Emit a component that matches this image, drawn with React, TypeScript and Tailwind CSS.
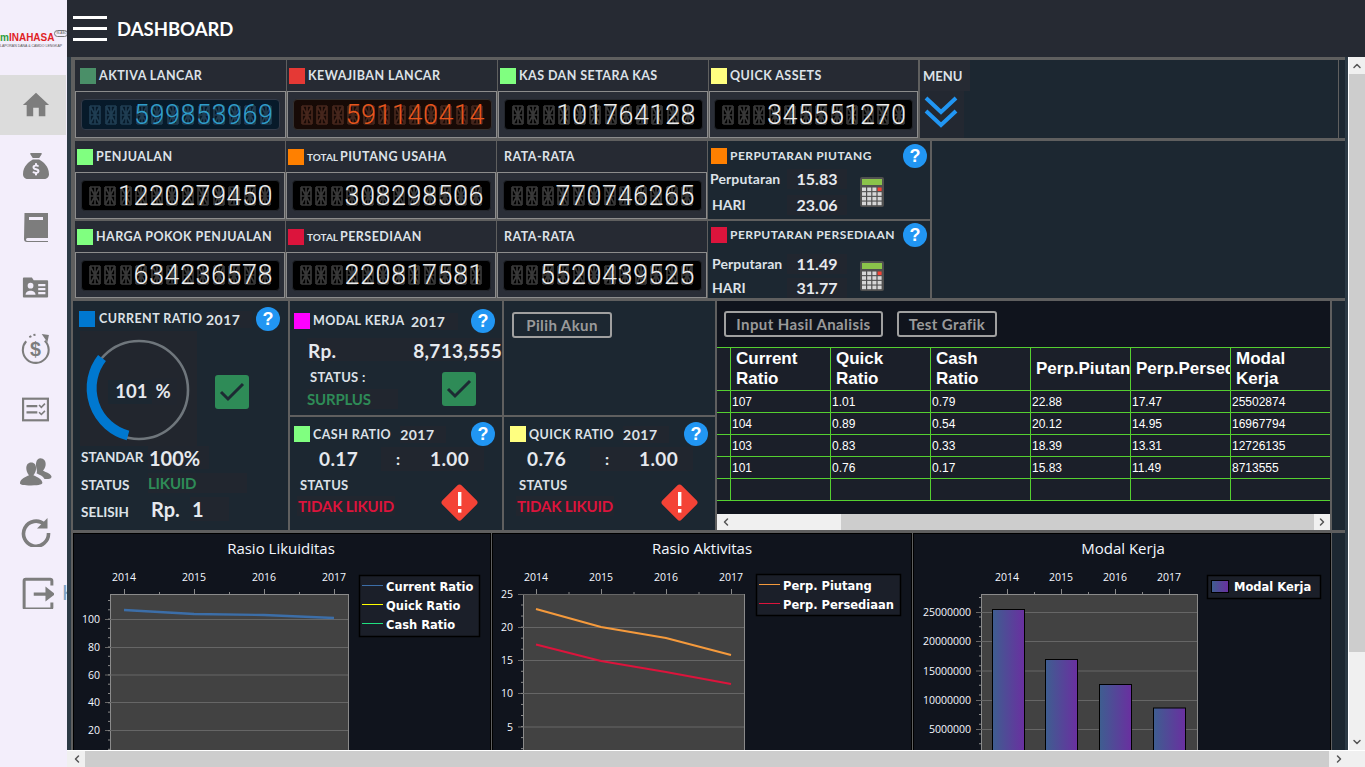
import React from 'react';
import { FaSackDollar } from 'react-icons/fa6';
import { ChevronLeft, ChevronRight, ChevronDown, ChevronUp } from 'lucide-react';

const ui = '[font-family:Lato,sans-serif]';

type LcdTheme = 'white' | 'blue' | 'orange';

const lcdThemes: Record<LcdTheme, { screen: string; lit: string; ghost: string; rim: string }> = {
  white: { screen: 'bg-black', lit: 'text-[#ececec]', ghost: 'text-[#383838]', rim: 'border-[#23262c]' },
  blue: { screen: 'bg-[#071a2a]', lit: 'text-[#2f9dca]', ghost: 'text-[#1f3d52]', rim: 'border-[#333a48]' },
  orange: { screen: 'bg-[#170a06]', lit: 'text-[#e8561c]', ghost: 'text-[#46261c]', rim: 'border-[#33302f]' },
};

const Ghost = () => (
  <svg viewBox="0 0 12 20" className="absolute left-0 top-0 h-[20px] w-[12px]" fill="none" stroke="currentColor" strokeWidth="1.7">
    <path d="M1 1h10M1 10h10M1 19h10M1 1v18M11 1v18M6 1v18M1 1l5 9 5-9M1 19l5-9 5 9" />
  </svg>
);

const Lcd = ({ value, theme = 'white' }: { value: string; theme?: LcdTheme }) => {
  const t = lcdThemes[theme];
  const cells = value.padStart(12, ' ').split('');
  return (
    <div className={`flex h-[31px] w-[199px] items-center justify-center rounded-[4px] border pl-[3px] ${t.rim} ${t.screen}`}>
      <div className="flex">
        {cells.map((c, i) => (
          <span key={i} className={`relative h-[20px] w-[15.5px] ${t.ghost}`}>
            <Ghost />
            <span className={`absolute left-[-2px] top-0 w-[16px] text-center text-[27px] font-light leading-[20px] [font-family:Roboto,sans-serif] ${t.lit}`}>
              {c.trim()}
            </span>
          </span>
        ))}
      </div>
    </div>
  );
};

const Title = ({ children, className = '' }: { children: React.ReactNode; className?: string }) => (
  <span className={`whitespace-nowrap text-[12.5px] font-bold tracking-[0.45px] text-[#dde2e8] ${className}`}>{children}</span>
);

const Swatch = ({ color }: { color: string }) => <span className={`h-[16px] w-[16px] shrink-0 ${color}`} />;

const Help = () => (
  <span className="flex h-[24px] w-[24px] shrink-0 items-center justify-center rounded-full bg-[#2196f3] text-[18px] font-bold leading-none text-white [font-family:'Liberation_Sans',sans-serif]">
    ?
  </span>
);

const StatCard = ({
  title,
  prefix,
  value,
  swatch,
  theme,
  width,
  small = false,
}: {
  title: string;
  prefix?: string;
  value: string;
  swatch?: string;
  theme?: LcdTheme;
  width: string;
  small?: boolean;
}) => (
  <div className={`flex flex-col ${width}`}>
    <div className={`flex h-[31px] items-center gap-[3px] bg-[#262a33] ${small ? 'pl-[2px]' : 'pl-[5px]'}`}>
      {swatch && <Swatch color={swatch} />}
      {prefix && <span className="mt-[2px] text-[10px] font-bold text-[#dde2e8]">{prefix}</span>}
      <Title className={`mt-[2px] ${swatch ? (prefix ? '-ml-px' : '') : 'ml-[2px]'}`}>{title}</Title>
    </div>
    <div className="flex flex-1 items-center justify-center border border-[#8c8c8c] bg-[#2a2e37]">
      <Lcd value={value} theme={theme} />
    </div>
  </div>
);

const Calculator = () => (
  <svg viewBox="0 0 24 30" className="h-[30px] w-[24px]">
    <rect width="24" height="30" rx="2" fill="#505050" />
    <rect x="2" y="2" width="20" height="6" fill="#8bc34a" />
    {[0, 1, 2, 3].map((r) =>
      [0, 1, 2, 3].map((c) => (
        <rect key={`${r}-${c}`} x={2 + c * 5.2} y={10.5 + r * 4.7} width="4" height="3.6" fill={r === 0 && c === 3 ? '#f44336' : '#d6d6d6'} />
      )),
    )}
  </svg>
);

const Turnover = ({
  title,
  swatch,
  a,
  b,
  className,
  rowGap,
  labelPad,
}: {
  title: string;
  swatch: string;
  a: string;
  b: string;
  className: string;
  rowGap: string;
  labelPad: string;
}) => (
  <div className={`flex flex-col bg-[#1c2731] ${className}`}>
    <div className="flex items-center pl-[3px] pr-[3px]">
      <Swatch color={swatch} />
      <Title className="ml-[3px] text-[12px] tracking-[0.3px]">{title}</Title>
      <span className="flex-1" />
      <Help />
    </div>
    <div className="flex items-center pl-[2px]">
      <div className={`flex w-[137px] flex-col ${rowGap}`}>
        <div className="flex items-center justify-between">
          <span className={`text-[14px] font-bold tracking-[0.1px] text-[#dde2e8] ${labelPad}`}>Perputaran</span>
          <span className="flex h-[20px] w-[60px] items-center justify-center bg-[#21262f] text-[16px] font-bold text-[#e6e9ee]">{a}</span>
        </div>
        <div className="flex items-center justify-between">
          <span className="pl-[2px] text-[14px] font-bold text-[#dde2e8]">HARI</span>
          <span className="flex h-[20px] w-[60px] items-center justify-center bg-[#21262f] text-[16px] font-bold text-[#e6e9ee]">{b}</span>
        </div>
      </div>
      <span className="ml-[13px]">
        <Calculator />
      </span>
    </div>
  </div>
);

const CheckBadge = () => (
  <svg viewBox="0 0 34 34" className="h-[34px] w-[34px] shrink-0">
    <rect width="34" height="34" rx="3" fill="#2e8b57" />
    <path d="M6 17l7 7L28 9" fill="none" stroke="#1d2a33" strokeWidth="3" />
  </svg>
);

const Warn = () => (
  <svg viewBox="0 0 37 37" className="h-[37px] w-[37px] shrink-0">
    <path d="M18.5 0.5a3 3 0 0 1 2.2 1l15 15a3 3 0 0 1 0 4l-15 15a3 3 0 0 1-4.4 0l-15-15a3 3 0 0 1 0-4l15-15a3 3 0 0 1 2.2-1z" fill="#f44336" />
    <rect x="17" y="8" width="3.4" height="14" fill="#fff" />
    <rect x="17" y="25" width="3.4" height="3.6" fill="#fff" />
  </svg>
);

const Year = ({ className = '' }: { className?: string }) => (
  <span className={`flex h-[17px] w-[46px] items-center bg-[#21262f] text-[14px] font-bold tracking-[0.5px] text-[#dde2e8] ${className}`}>2017</span>
);

const RatioCard = ({
  title,
  swatch,
  left,
  className,
  valueGap,
  leftPad,
  statusPad,
  warnPad,
}: {
  title: string;
  swatch: string;
  left: string;
  className: string;
  valueGap: string;
  leftPad: string;
  statusPad: string;
  warnPad: string;
}) => (
  <div className={`flex h-[113px] flex-col bg-[#1c2731] ${className}`}>
    <div className="flex h-[30px] items-center pt-[4px]">
      <Swatch color={swatch} />
      <Title className="ml-[3px] mt-[2px]">{title}</Title>
      <Year className="ml-[9px]" />
      <span className="flex-1" />
      <span className="mr-[7px]">
        <Help />
      </span>
    </div>
    <div className="flex h-[24px] items-center text-[19px] font-bold tracking-[0.4px] text-[#e6e9ee]">
      <span className={`w-[38px] ${leftPad}`}>{left}</span>
      <span className={`flex h-[24px] w-[103px] items-center bg-[#21262f] text-[16px] ${valueGap}`}>
        <span className="w-[49px] pl-[15px]">:</span>
        <span className="text-[19px]">1.00</span>
      </span>
    </div>
    <div className={`flex flex-1 items-start pt-[6px] ${statusPad}`}>
      <div className="flex flex-col gap-[3px]">
        <span className="pl-[3px] text-[13px] font-bold leading-[16px] tracking-[0.3px] text-[#dde2e8]">STATUS</span>
        <span className="bg-[#21262f] px-[1px] text-[15px] font-bold leading-[20px] tracking-[-0.2px] text-[#dc143c]">TIDAK LIKUID</span>
      </div>
      <span className="flex-1" />
      <span className={`mt-[7px] ${warnPad}`}>
        <Warn />
      </span>
    </div>
  </div>
);

const Gauge = () => (
  <div className="relative flex h-[115px] w-[117px] items-center justify-center bg-[#22262e]">
    <svg viewBox="0 0 117 115" className="absolute inset-0 h-[115px] w-[117px]">
      <circle cx="59" cy="59" r="49" fill="none" stroke="#6f767c" strokeWidth="2.6" />
      <path d="M22 27A49 49 0 0 0 48 104.5" fill="none" stroke="#0078d0" strokeWidth="10" />
    </svg>
    <span className="relative ml-[8px] mt-[6px] flex h-[24px] items-center gap-[4px] bg-[#1c2731] pl-[7px] text-[18.5px] font-bold text-[#e6e9ee]">
      101<span className="bg-[#21262f] pr-[6px] pl-[4px]">%</span>
    </span>
  </div>
);

const CurrentCard = () => (
  <div className="flex h-[229px] w-[215px] flex-col bg-[#1c2731]">
    <div className="flex h-[30px] items-center pl-[6px] pt-[6px]">
      <Swatch color="bg-[#0078d0]" />
      <Title className="ml-[4px] w-[102px]">CURRENT RATIO</Title>
      <Year className="ml-[5px]" />
      <span className="ml-[4px]">
        <Help />
      </span>
    </div>
    <div className="flex items-center pl-[7px]">
      <Gauge />
      <span className="ml-[18px] mt-[6px]">
        <CheckBadge />
      </span>
    </div>
    <div className="flex flex-col pl-[8px]">
      <div className="flex h-[23px] items-center">
        <span className="w-[67px] text-[13.5px] font-bold text-[#dde2e8]">STANDAR</span>
        <span className="flex h-[23px] w-[61px] items-center bg-[#21262f] pl-[1px] text-[20px] font-bold text-[#e6e9ee]">100%</span>
      </div>
      <div className="mt-[4px] flex h-[20px] items-center">
        <span className="w-[67px] pt-[4px] text-[13.5px] font-bold text-[#dde2e8]">STATUS</span>
        <span className="flex h-[20px] w-[99px] items-center bg-[#21262f] text-[15px] font-bold tracking-[-0.2px] text-[#2e8b57]">LIKUID</span>
      </div>
      <div className="mt-[4px] flex h-[24px] items-center">
        <span className="w-[70px] pt-[6px] text-[13.5px] font-bold text-[#dde2e8]">SELISIH</span>
        <span className="w-[39px] text-[20px] font-bold text-[#e6e9ee]">Rp.</span>
        <span className="flex h-[24px] w-[39px] items-center bg-[#21262f] pl-[2px] text-[20px] font-bold text-[#e6e9ee]">1</span>
      </div>
    </div>
  </div>
);

const ModalCard = () => (
  <div className="flex h-[114px] flex-col bg-[#1c2731] pl-[4px]">
    <div className="flex h-[36px] items-center pt-[4px]">
      <Swatch color="bg-[#ff00ff]" />
      <Title className="ml-[3px] w-[98px]">MODAL KERJA</Title>
      <Year className="w-[47px]" />
      <span className="ml-[13px]">
        <Help />
      </span>
    </div>
    <div className="ml-[13px] mt-[1px] flex h-[23px] items-center justify-between bg-[#21262f] pl-[1px] pt-[3px] text-[19px] font-bold tracking-[0.3px] text-[#e6e9ee]">
      <span>Rp.</span>
      <span>8,713,555</span>
    </div>
    <div className="flex flex-1 items-center pl-[13px] pt-[1px]">
      <div className="flex flex-col gap-[1px]">
        <span className="pl-[3px] text-[13px] font-bold tracking-[0.3px] text-[#dde2e8]">STATUS :</span>
        <span className="flex h-[20px] w-[91px] items-center bg-[#21262f] text-[15px] font-bold tracking-[-0.2px] text-[#2e8b57]">SURPLUS</span>
      </div>
      <span className="ml-[44px]">
        <CheckBadge />
      </span>
    </div>
  </div>
);

const Outlined = ({ children, className }: { children: React.ReactNode; className: string }) => (
  <button className={`flex h-[26px] items-center justify-center rounded-[3px] border-[2.5px] border-[#a0a0a0] text-[15px] font-bold tracking-[0.4px] text-[#9a9a9a] ${ui} ${className}`}>
    {children}
  </button>
);

const columns = [
  { key: 'Current Ratio', lines: ['Current', 'Ratio'] },
  { key: 'Quick Ratio', lines: ['Quick', 'Ratio'] },
  { key: 'Cash Ratio', lines: ['Cash', 'Ratio'] },
  { key: 'Perp.Piutang', lines: ['Perp.Piutang'] },
  { key: 'Perp.Persediaan', lines: ['Perp.Persediaan'] },
  { key: 'Modal Kerja', lines: ['Modal', 'Kerja'] },
];

const tableRows = [
  ['107', '1.01', '0.79', '22.88', '17.47', '25502874'],
  ['104', '0.89', '0.54', '20.12', '14.95', '16967794'],
  ['103', '0.83', '0.33', '18.39', '13.31', '12726135'],
  ['101', '0.76', '0.17', '15.83', '11.49', '8713555'],
  ['', '', '', '', '', ''],
];

const DataTable = () => (
  <div className="flex h-[229px] w-[613px] flex-col bg-[#10141d] [font-family:'Liberation_Sans',sans-serif]">
    <div className="flex h-[46px] items-center gap-[14px] pl-[7px]">
      <Outlined className="w-[159px]">Input Hasil Analisis</Outlined>
      <Outlined className="w-[100px]">Test Grafik</Outlined>
    </div>
    <div className="border-t border-t-[#55d030] bg-[#1b1f29]">
      <div className="flex h-[43px] border-b border-b-[#55d030]">
        <span className="w-[13px] shrink-0" />
        {columns.map((c) => (
          <div key={c.key} className="flex w-[100px] shrink-0 flex-col justify-center overflow-hidden border-l border-l-[#55d030] pl-[5px] text-[17px] font-bold leading-[20px] text-white">
            {c.lines.map((l) => (
              <span key={l} className="whitespace-nowrap">
                {l}
              </span>
            ))}
          </div>
        ))}
      </div>
      {tableRows.map((row, i) => (
        <div key={i} className="flex h-[22px] border-b border-b-[#55d030]">
          <span className="w-[13px] shrink-0" />
          {row.map((v, j) => (
            <div key={j} className="flex w-[100px] shrink-0 items-center border-l border-l-[#55d030] pl-[1px] text-[12px] text-white">
              {v}
            </div>
          ))}
        </div>
      ))}
    </div>
    <div className="flex-1" />
    <div className="flex h-[16px] items-center bg-[#f0f0f0]">
      <span className="flex w-[17px] justify-center">
        <ChevronLeft size={12} strokeWidth={3} color="#555" />
      </span>
      <span className="ml-[107px] h-full w-[473px] bg-[#cdcdcd]" />
      <span className="flex flex-1 justify-center">
        <ChevronRight size={12} strokeWidth={3} color="#555" />
      </span>
    </div>
  </div>
);

const tickMarks = (xs: number[], top: number) =>
  xs.map((x, i) => <line key={x} x1={x + 0.5} x2={x + 0.5} y1={i % 2 === 0 ? top - 5 : top - 2} y2={top} stroke="#8a8a8a" />);

const chartFont = "'Open Sans',sans-serif";
const legendFont = "'DejaVu Sans',sans-serif";

const Chart = ({
  box,
  title,
  titleX,
  plot,
  years,
  yLabels,
  minor,
  legend,
  children,
}: {
  box: [number, number];
  title: string;
  titleX: number;
  plot: [number, number];
  years: number[];
  yLabels: [string, number][];
  minor: number[];
  legend: { x: number; y: number; w: number; h: number; items: { label: string; color: string; y: number }[]; swatch?: boolean };
  children: React.ReactNode;
}) => {
  const [x0, x1] = plot;
  const step = years[1] - years[0];
  const topTicks = years.flatMap((x, i) => (i < years.length - 1 ? [x, x + step / 2] : [x]));
  return (
    <div className="h-[240px] shrink-0 border border-black bg-[#10141d]" style={{ width: box[1] }}>
      <svg viewBox={`${box[0] + 1} 534 ${box[1] - 2} 238`} width={box[1] - 2} height={238} className="block">
        <defs>
          <linearGradient id="bar" x1="0" x2="1" y1="0" y2="0">
            <stop offset="0" stopColor="#3e5e90" />
            <stop offset="1" stopColor="#6a2fa0" />
          </linearGradient>
        </defs>
        <text x={titleX} y={554} textAnchor="middle" fontSize="15" fill="#f4f8ff" fontFamily={chartFont}>
          {title}
        </text>
        {years.map((x, i) => (
          <text key={x} x={x} y={581} textAnchor="middle" fontSize="10.5" fill="#f4f8ff" fontFamily={chartFont}>
            {2014 + i}
          </text>
        ))}
        {tickMarks(topTicks, 594)}
        <rect x={x0 + 0.5} y={594.5} width={x1 - x0} height={200} fill="#424242" stroke="#8a8a8a" />
        {yLabels.map(([l, y]) => (
          <g key={l}>
            <line x1={x0 - 5} x2={x1} y1={y + 0.5} y2={y + 0.5} stroke="#666" />
            <text x={x0 - 10} y={y + 4} textAnchor="end" fontSize="10.5" fill="#f4f8ff" fontFamily={chartFont}>
              {l}
            </text>
          </g>
        ))}
        {minor.map((y) => (
          <line key={y} x1={x0 - 2} x2={x0} y1={y} y2={y} stroke="#8a8a8a" />
        ))}
        {children}
        <rect x={legend.x + 0.5} y={legend.y + 0.5} width={legend.w} height={legend.h} fill="#1b1f29" stroke="#000" strokeWidth="1.5" />
        {legend.items.map((it) => (
          <g key={it.label}>
            {legend.swatch ? (
              <rect x={legend.x + 4.5} y={it.y - 5.5} width={17} height={12} fill="url(#bar)" stroke="#000" />
            ) : (
              <line x1={legend.x + 3} x2={legend.x + 24} y1={it.y - 0.5} y2={it.y - 0.5} stroke={it.color} />
            )}
            <text x={legend.x + 27} y={it.y + 4.5} fontSize="11.5" fontWeight="700" fill="#fff" fontFamily={legendFont}>
              {it.label}
            </text>
          </g>
        ))}
      </svg>
    </div>
  );
};

const every = (start: number, gap: number, count: number) => Array.from({ length: count }, (_, i) => start + i * gap);

const Charts = () => (
  <div className="flex gap-px">
    <Chart
      box={[73, 418]}
      title="Rasio Likuiditas"
      titleX={281}
      plot={[110, 348]}
      years={[124, 194, 264, 334]}
      yLabels={[
        ['100', 619],
        ['80', 647],
        ['60', 674.5],
        ['40', 702],
        ['20', 730],
      ]}
      minor={every(600.5, 9.3, 17)}
      legend={{
        x: 359,
        y: 575,
        w: 120,
        h: 61,
        items: [
          { label: 'Current Ratio', color: '#3c6ea8', y: 586 },
          { label: 'Quick Ratio', color: '#ffff00', y: 605 },
          { label: 'Cash Ratio', color: '#20e080', y: 624 },
        ],
      }}
    >
      <polyline points="124,610 194,614 264,615 334,618" fill="none" stroke="#3c6ea8" strokeWidth="2.4" />
    </Chart>
    <Chart
      box={[492, 420]}
      title="Rasio Aktivitas"
      titleX={702}
      plot={[523, 744]}
      years={[536, 601, 666, 731]}
      yLabels={[
        ['25', 594],
        ['20', 627],
        ['15', 660],
        ['10', 693],
        ['5', 726.5],
      ]}
      minor={every(605, 11.05, 14)}
      legend={{
        x: 756,
        y: 574,
        w: 144,
        h: 41,
        items: [
          { label: 'Perp. Piutang', color: '#f59a3c', y: 585 },
          { label: 'Perp. Persediaan', color: '#dc143c', y: 604 },
        ],
      }}
    >
      <polyline points="536,609 601,627 666,638 731,655" fill="none" stroke="#f59a3c" strokeWidth="2.2" />
      <polyline points="536,644.5 601,661 666,672 731,684" fill="none" stroke="#dc143c" strokeWidth="2.2" />
    </Chart>
    <Chart
      box={[913, 418]}
      title="Modal Kerja"
      titleX={1123}
      plot={[981, 1197]}
      years={[1007, 1061, 1115, 1169]}
      yLabels={[
        ['25000000', 612],
        ['20000000', 641],
        ['15000000', 670.5],
        ['10000000', 700],
        ['5000000', 729],
      ]}
      minor={every(597.5, 9.75, 16)}
      legend={{
        x: 1207,
        y: 575,
        w: 113,
        h: 23,
        swatch: true,
        items: [{ label: 'Modal Kerja', color: '#6a2fa0', y: 586 }],
      }}
    >
      {[
        [992, 609],
        [1045, 659],
        [1099, 684],
        [1153, 707.5],
      ].map(([x, y]) => (
        <rect key={x} x={x + 0.5} y={y + 0.5} width={32} height={200} fill="url(#bar)" stroke="#000" />
      ))}
    </Chart>
    <div className="flex-1 bg-[#1c2731]" />
  </div>
);

const Icon = ({ children, size = 30 }: { children: React.ReactNode; size?: number }) => (
  <svg viewBox="0 0 30 30" width={size} height={size} fill="#7d7d7d" className="shrink-0">
    {children}
  </svg>
);

const sideIcons = [
  <Icon key="home" size={28}>
    <path d="M12 27v-9h6v9h7V15h4L15 2 1 15h4v12z" />
  </Icon>,
  <FaSackDollar key="bag" size={26} color="#7d7d7d" />,
  <Icon key="book">
    <path d="M3.5 1h23.500v25H6.500a1.500 1.500 0 0 0 0 3H27v1H6a3 3 0 0 1-3-3z" />
    <rect x="8" y="5" width="14" height="3" fill="#f3eefb" />
  </Icon>,
  <Icon key="card" size={27}>
    <path d="M2 4h9l2 3h15a1 1 0 0 1 1 1v17a1 1 0 0 1-1 1H2a1 1 0 0 1-1-1V5a1 1 0 0 1 1-1z" />
    <circle cx="9.500" cy="13" r="3.200" fill="#f3eefb" />
    <path d="M4 23c0-6 11-6 11 0z" fill="#f3eefb" />
    <path d="M18 11h8v2.500h-8zM18 15.500h8V18h-8zM18 20h8v2.500h-8z" fill="#f3eefb" />
  </Icon>,
  <Icon key="dollar" size={31}>
    <path d="M6 8A12.500 12.500 0 1 0 24 7.500" fill="none" stroke="#7d7d7d" strokeWidth="2" />
    <path d="M21 1l7 1-1.500 7z" />
    <path d="M9 4l2-1M13 2l2-.4" stroke="#7d7d7d" strokeWidth="2" />
    <text x="15" y="22" textAnchor="middle" fontSize="19" fontWeight="700" fill="#7d7d7d" fontFamily="'Liberation Sans',sans-serif">
      $
    </text>
  </Icon>,
  <Icon key="list" size={27}>
    <rect x="1.200" y="3" width="27.600" height="24" fill="none" stroke="#7d7d7d" strokeWidth="2.400" />
    <path d="M5 10h12v2.500H5zM5 17h12v2.500H5z" />
    <path d="M19 10l2.500 2.500 4-4M19 18l2.500 2.500 4-4" fill="none" stroke="#7d7d7d" strokeWidth="1.800" />
  </Icon>,
  <Icon key="users" size={32}>
    <path d="M19 3c3.500 0 5.500 3 5 6.500-.4 2.500-1.500 4-2.500 5 2 1.500 7 2.500 8 5.500.4 1.500-1 2.500-3 2.500h-3.500c-1.500-3-4.500-4-7.500-5.500 1-1.500 0-3-.5-7-.2-3.500 1-7 4-7z" />
    <path d="M10.500 7c3.500 0 5 3 4.500 6.500-.3 2.500-1.400 4-2.500 5.500 3 1.500 8 3 8.500 7 .1 1.500-2 2.500-10.500 2.500S-.500 27.500 0 26c.5-4 5.500-5.500 8.500-7-1.100-1.500-2.200-3-2.500-5.500C5.500 10 7 7 10.500 7z" />
  </Icon>,
  <Icon key="redo">
    <path d="M23.500 7.500A12.500 12.500 0 1 0 27.500 16" fill="none" stroke="#7d7d7d" strokeWidth="3.600" />
    <path d="M26.500 1v10.500H16z" />
  </Icon>,
  <Icon key="out" size={32}>
    <path d="M28 8V3.500A1.500 1.500 0 0 0 26.500 2H3.500A1.500 1.500 0 0 0 2 3.500v25A1.500 1.500 0 0 0 3.500 30h23a1.500 1.500 0 0 0 1.500-1.500V24" fill="none" stroke="#7d7d7d" strokeWidth="2.800" />
    <path d="M11 14.500h11V9l9 7-9 7v-5.500H11z" />
  </Icon>,
];

const Sidebar = () => (
  <aside className="flex w-[67px] shrink-0 flex-col overflow-hidden bg-[#f3eefb]">
    <div className="h-[75px] pt-[30px]">
      <div className="flex items-start [font-family:'Liberation_Sans',sans-serif]">
        <span className="mt-[1px] text-[10px] font-bold leading-[13px] text-[#2e9e3e]">m</span>
        <span className="mt-[1px] text-[10px] font-bold leading-[13px] text-[#e01f26]">INAHASA</span>
        <span className="flex h-[7px] w-[14px] shrink-0 items-center justify-center rounded-full border border-[#777] text-[3px] leading-none text-[#555]">IN-ABC</span>
      </div>
      <div className="text-[3.5px] leading-[4px] text-[#555] [font-family:'Liberation_Sans',sans-serif]">LAPORAN DANA &amp; CAMDO LENGKAP</div>
    </div>
    {sideIcons.map((icon, i) => (
      <div
        key={i}
        className={`flex w-[66px] shrink-0 items-center ${i === 0 ? 'h-[60px] bg-[#dcdcdc]' : 'h-[61px]'} ${i === 8 ? 'pl-[22px]' : 'justify-center pl-[5px]'}`}
      >
        {icon}
        {i === 8 && <span className="ml-[8px] text-[22px] text-[#7fa4c4] [font-family:'Liberation_Sans',sans-serif]">K</span>}
      </div>
    ))}
  </aside>
);

const Header = () => (
  <header className="flex h-[57px] shrink-0 items-center bg-[#262a33] pl-[6px]">
    <div className="flex w-[34px] flex-col gap-[8px]">
      <span className="h-[3px] bg-white" />
      <span className="h-[3px] bg-white" />
      <span className="h-[3px] bg-white" />
    </div>
    <h1 className={`ml-[10px] mt-[2px] text-[18.5px] font-bold text-white ${ui}`}>DASHBOARD</h1>
  </header>
);

const VerticalBar = () => (
  <div className="flex w-[17px] shrink-0 flex-col border-l border-white bg-[#f0f0f0]">
    <span className="flex h-[17px] shrink-0 items-center justify-center">
      <ChevronUp size={12} strokeWidth={3} color="#555" />
    </span>
    <span className="h-[578px] bg-[#cdcdcd]" />
    <span className="flex-1" />
    <span className="flex h-[17px] shrink-0 items-center justify-center">
      <ChevronDown size={12} strokeWidth={3} color="#555" />
    </span>
  </div>
);

const HorizontalBar = () => (
  <div className="flex h-[17px] shrink-0 items-center border-t border-white bg-[#f0f0f0] pl-px">
    <span className="flex w-[17px] justify-center">
      <ChevronLeft size={12} strokeWidth={3} color="#555" />
    </span>
    <span className="h-full w-[1244px] bg-[#cdcdcd]" />
    <span className="flex w-[20px] justify-center">
      <ChevronRight size={12} strokeWidth={3} color="#555" />
    </span>
  </div>
);

const Dashboard = () => (
  <div className={`ml-[4px] mr-[3px] flex min-h-0 flex-1 flex-col gap-[3px] overflow-hidden bg-[#5f5f5f] pt-[3px] ${ui}`}>
    <div className="flex h-[78px] shrink-0 gap-px pl-[4px]">
      <StatCard width="w-[211px]" title="AKTIVA LANCAR" value="599853969" swatch="bg-[#4a8f68]" theme="blue" />
      <StatCard width="w-[210px]" title="KEWAJIBAN LANCAR" value="591140414" swatch="bg-[#e53935]" theme="orange" small />
      <StatCard width="w-[210px]" title="KAS DAN SETARA KAS" value="101764128" swatch="bg-[#80ff80]" small />
      <StatCard width="w-[209px]" title="QUICK ASSETS" value="345551270" swatch="bg-[#ffff80]" small />
      <div className="ml-px flex w-[418px] bg-[#1c2731]">
        <div className="flex w-[50px] flex-col">
          <span className="flex h-[31px] items-center bg-[#262a33] pl-[3px] pt-[2px] text-[13px] font-bold text-[#dde2e8]">MENU</span>
          <div className="w-[44px] flex-1 bg-[#232831] pl-[4px] pt-[5px]">
            <svg viewBox="0 0 34 32" className="h-[32px] w-[34px]" fill="none" stroke="#2196f3" strokeWidth="4">
              <path d="M2 2l15 14L32 2M2 15l15 14 15-14" />
            </svg>
          </div>
        </div>
      </div>
      <div className="flex-1 bg-[#1c2731]" />
    </div>

    <div className="flex h-[157px] shrink-0 pl-[4px]">
      <div className="flex w-[632px] shrink-0 flex-col gap-[2px]">
        <div className="flex h-[78px] gap-px">
          <StatCard width="w-[210px]" title="PENJUALAN" value="1220279450" swatch="bg-[#80ff80]" small />
          <StatCard width="w-[210px]" title="PIUTANG USAHA" prefix="TOTAL" value="308298506" swatch="bg-[#ff8000]" small />
          <StatCard width="w-[210px]" title="RATA-RATA" value="770746265" />
        </div>
        <div className="flex h-[77px] gap-px">
          <StatCard width="w-[210px]" title="HARGA POKOK PENJUALAN" value="634236578" swatch="bg-[#80ff80]" small />
          <StatCard width="w-[210px]" title="PERSEDIAAN" prefix="TOTAL" value="220817581" swatch="bg-[#dc143c]" small />
          <StatCard width="w-[210px]" title="RATA-RATA" value="5520439525" />
        </div>
      </div>
      <div className="ml-px mr-[2px] flex w-[222px] shrink-0 flex-col gap-[2px]">
        <Turnover title="PERPUTARAN PIUTANG" swatch="bg-[#ff8000]" a="15.83" b="23.06" className="h-[78px] pt-[3px]" rowGap="gap-[5px]" labelPad="" />
        <Turnover title="PERPUTARAN PERSEDIAAN" swatch="bg-[#dc143c]" a="11.49" b="31.77" className="h-[77px] gap-[6px] pt-[2px]" rowGap="gap-[3px]" labelPad="pl-[2px]" />
      </div>
      <div className="flex-1 bg-[#1c2731]" />
    </div>

    <div className="flex h-[229px] shrink-0 gap-[2px] pl-[2px]">
      <CurrentCard />
      <div className="flex w-[425px] shrink-0 flex-col gap-[2px]">
        <div className="flex gap-[2px]">
          <div className="w-[212px] shrink-0">
            <ModalCard />
          </div>
          <div className="flex-1 bg-[#1c2731] pl-[8px] pt-[11px]">
            <Outlined className="w-[100px]">Pilih Akun</Outlined>
          </div>
        </div>
        <div className="flex gap-[2px]">
          <RatioCard className="w-[212px] pl-[4px]" title="CASH RATIO" swatch="bg-[#80ff80]" left="0.17" leftPad="ml-[25px]" valueGap="ml-[24px]" statusPad="pl-[3px]" warnPad="mr-[24px]" />
          <RatioCard className="flex-1 pl-[6px]" title="QUICK RATIO" swatch="bg-[#ffff80]" left="0.76" leftPad="ml-[17px]" valueGap="ml-[25px]" statusPad="pl-[6px]" warnPad="mr-[17px]" />
        </div>
      </div>
      <DataTable />
      <div className="flex-1 bg-[#1c2731]" />
    </div>

    <div className="pl-[2px]">
      <Charts />
    </div>
  </div>
);

export default function App() {
  return (
    <div className="flex h-screen w-screen overflow-hidden bg-white">
      <Sidebar />
      <div className="flex min-w-0 flex-1 flex-col">
        <Header />
        <div className="flex min-h-0 flex-1">
          <div className="flex min-w-0 flex-1 flex-col bg-[#2c3a45]">
            <Dashboard />
          </div>
          <VerticalBar />
        </div>
        <HorizontalBar />
      </div>
    </div>
  );
}
